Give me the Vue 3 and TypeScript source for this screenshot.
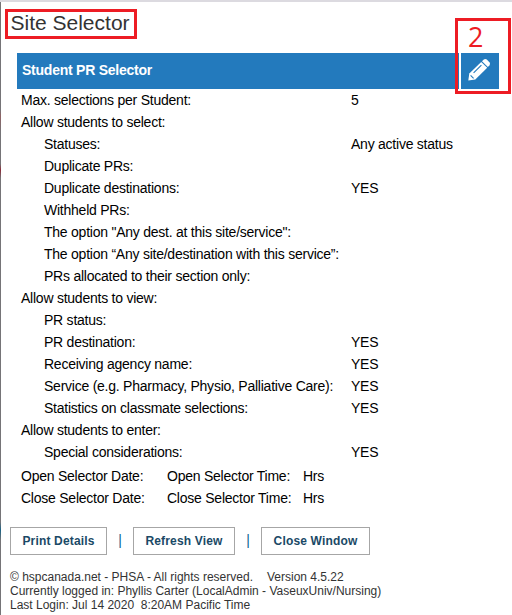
<script setup lang="ts">
interface Row {
  label: string
  value?: string
  child?: boolean
}

const rows: Row[] = [
  { label: 'Max. selections per Student:', value: '5' },
  { label: 'Allow students to select:' },
  { label: 'Statuses:', value: 'Any active status', child: true },
  { label: 'Duplicate PRs:', child: true },
  { label: 'Duplicate destinations:', value: 'YES', child: true },
  { label: 'Withheld PRs:', child: true },
  { label: 'The option "Any dest. at this site/service":', child: true },
  { label: 'The option “Any site/destination with this service”:', child: true },
  { label: 'PRs allocated to their section only:', child: true },
  { label: 'Allow students to view:' },
  { label: 'PR status:', child: true },
  { label: 'PR destination:', value: 'YES', child: true },
  { label: 'Receiving agency name:', value: 'YES', child: true },
  { label: 'Service (e.g. Pharmacy, Physio, Palliative Care):', value: 'YES', child: true },
  { label: 'Statistics on classmate selections:', value: 'YES', child: true },
  { label: 'Allow students to enter:' },
  { label: 'Special considerations:', value: 'YES', child: true },
]

const windows = ['Open', 'Close']
</script>

<template>
  <main class="page">
    <h1 class="title"><span>Site Selector</span></h1>

    <section class="panel">
      <header class="bar">
        <h2 class="bar-title">Student PR Selector</h2>
        <button class="edit" aria-label="Edit">
          <svg width="24" height="24" viewBox="0 0 24 24">
            <path fill="#fff" d="M1.3 22.6 2.3 15.6 14.2 4 20.2 9.8 8.3 21.5Z" />
            <path fill="#fff" d="M15 3.2 16.8 1.5Q18.3.3 19.8 1.6L22.4 4.3Q23.7 5.8 22.5 7.3L20.9 9Z" />
            <path fill="none" stroke="#237abd" stroke-width="1.1" d="M6.6 14.8 14.4 7.2M3.6 17.4 6.6 20.3" />
          </svg>
        </button>
      </header>

      <dl class="rows">
        <div v-for="row in rows" :key="row.label" class="row">
          <dt :class="{ child: row.child }">{{ row.label }}</dt>
          <dd>{{ row.value }}</dd>
        </div>
      </dl>

      <div class="dates">
        <div v-for="name in windows" :key="name" class="date-row">
          <span>{{ name }} Selector Date:</span>
          <span>{{ name }} Selector Time:</span>
          <span>Hrs</span>
        </div>
      </div>
    </section>

    <nav class="actions">
      <button class="btn print">Print Details</button>
      <span class="sep">|</span>
      <button class="btn refresh">Refresh View</button>
      <span class="sep">|</span>
      <button class="btn close">Close Window</button>
    </nav>

    <footer class="foot">
      <p>© hspcanada.net - PHSA - All rights reserved.<span class="version">Version 4.5.22</span></p>
      <p>Currently logged in: Phyllis Carter (LocalAdmin - VaseuxUniv/Nursing)</p>
      <p>Last Login: Jul 14 2020&nbsp; 8:20AM Pacific Time</p>
    </footer>

    <div class="callout"><span>2</span></div>
  </main>
</template>

<style>
body {
  background: #fff;
}
</style>

<style scoped>
.page {
  position: relative;
  box-sizing: border-box;
  width: 512px;
  height: 615px;
  overflow: hidden;
  border-top: 2px solid #dcdae0;
  padding-left: 1px;
  background:
    linear-gradient(#757477 0 108px, #8f6264 114px, #757477 130px 162px, #8a2b38 168px, #757477 176px 520px, #1b6385 528px, #757477 538px) 0 0 / 1px 100% no-repeat,
    #fff;
  color: #000;
  font-family: "Liberation Sans", Arial, sans-serif;
  font-size: 14px;
}
.title {
  box-sizing: border-box;
  width: 132px;
  height: 30px;
  margin: 7px 0 0 4px;
  border: 3px solid #ed1c24;
  padding-left: 2.5px;
  color: #333;
  font-size: 21px;
  font-weight: 400;
  line-height: 22px;
  white-space: nowrap;
}
.panel {
  width: 482px;
  margin: 14px 0 0 16px;
  letter-spacing: -0.24px;
}
.bar {
  display: flex;
  gap: 2px;
  height: 36px;
}
.bar-title {
  width: 437px;
  margin: 0;
  padding-left: 5px;
  background: #237abd;
  color: #fff;
  font-size: 14px;
  line-height: 34px;
}
.edit {
  display: flex;
  align-items: center;
  justify-content: center;
  width: 38px;
  border: 0;
  padding: 0 2px 2px 0;
  background: #237abd;
}
.rows {
  margin: 0;
  padding-left: 4px;
}
.row {
  display: grid;
  grid-template-columns: 330px 1fr;
  height: 22px;
  line-height: 22px;
  white-space: nowrap;
}
.row dd {
  margin: 0;
}
.child {
  padding-left: 23px;
}
.dates {
  margin-top: 2px;
  padding-left: 4px;
}
.date-row {
  display: grid;
  grid-template-columns: 146px 136px 1fr;
  line-height: 22px;
}
.actions {
  display: flex;
  margin: 18px 0 0 9px;
}
.btn {
  box-sizing: border-box;
  height: 28px;
  border: 1px solid #a6a6a6;
  padding: 0;
  background: #fff;
  color: #1a4966;
  font: bold 12px/24px "Liberation Sans", Arial, sans-serif;
  letter-spacing: 0.16px;
  white-space: nowrap;
}
.print {
  width: 97px;
}
.refresh {
  width: 102px;
}
.close {
  width: 109px;
}
.sep {
  width: 26px;
  color: #0c6693;
  line-height: 27px;
  text-align: center;
}
.foot {
  margin: 15px 0 0 9px;
  color: #333;
  font-size: 12px;
  line-height: 14px;
}
.foot p {
  margin: 0;
  white-space: nowrap;
}
.version {
  margin-left: 14px;
}
.callout {
  position: absolute;
  top: 16px;
  left: 455px;
  box-sizing: border-box;
  width: 56px;
  height: 76px;
  border: 3px solid #ed1c24;
  padding-left: 10px;
  color: #ed1c24;
  font: 27px/32px "Open Sans", "Noto Sans", sans-serif;
}
</style>
